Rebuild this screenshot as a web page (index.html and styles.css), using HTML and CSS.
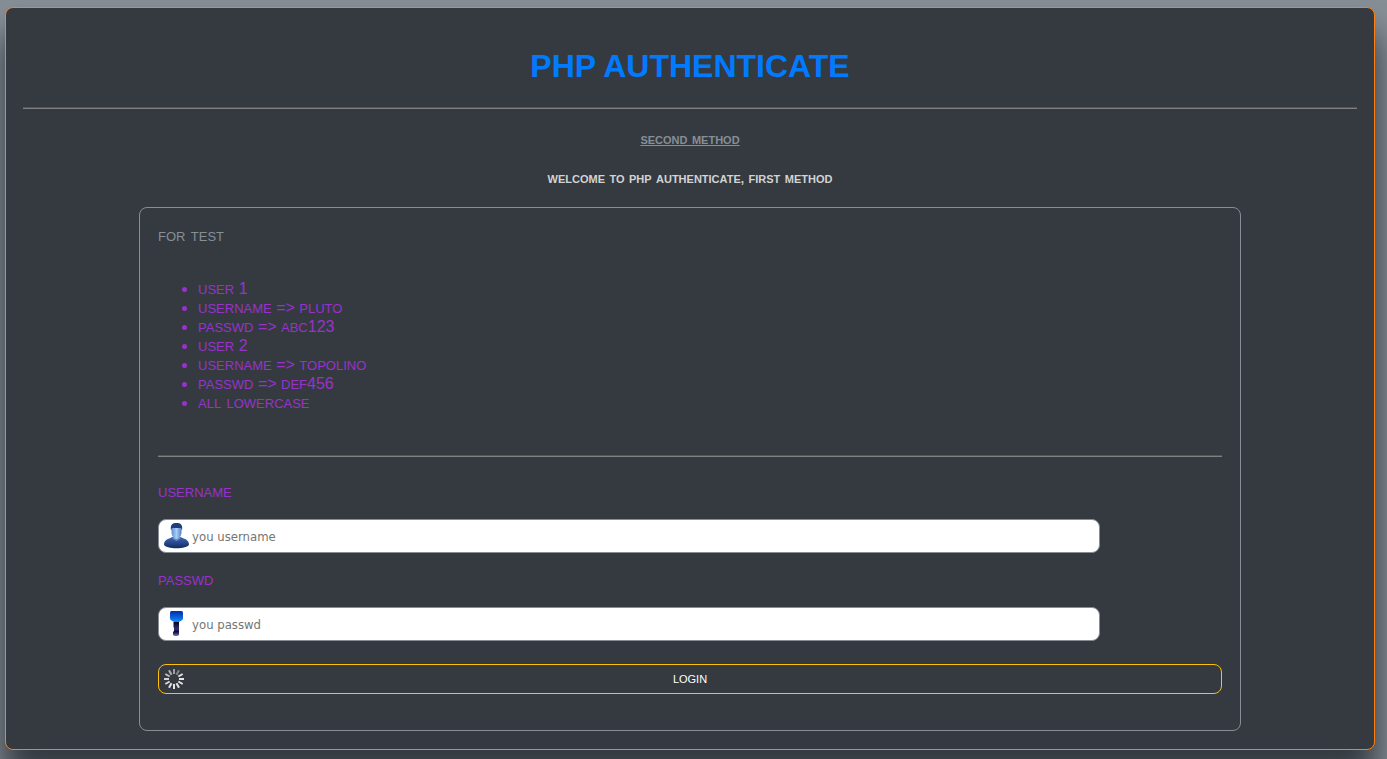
FILE: index.html
```
<!DOCTYPE html>
<html lang="en">
<head>
<meta charset="utf-8">
<title>PHP Authenticate</title>
<link rel="stylesheet" href="styles.css">
</head>
<body>
<main class="card">
  <h1 class="title">PHP AUTHENTICATE</h1>
  <hr class="rule">
  <p class="method"><a href="#second">second method</a></p>
  <h2 class="welcome">welcome to php authenticate<span class="comma">,</span> first method</h2>
  <form class="panel">
    <p class="hint caps">for test</p>
    <ul class="accounts">
      <li><span class="caps">user</span> 1</li>
      <li><span class="caps">username</span> =&gt; <span class="caps">pluto</span></li>
      <li><span class="caps">passwd</span> =&gt; <span class="caps">abc</span>123</li>
      <li><span class="caps">user</span> 2</li>
      <li><span class="caps">username</span> =&gt; <span class="caps">topolino</span></li>
      <li><span class="caps">passwd</span> =&gt; <span class="caps">def</span>456</li>
      <li><span class="caps">all lowercase</span></li>
    </ul>
    <hr class="rule">
    <label class="label caps" for="username">username</label>
    <div class="field">
      <svg class="icon" width="28" height="28" viewBox="0 0 28 28" aria-hidden="true">
        <defs>
          <linearGradient id="suit" x1="0" y1="0" x2="0" y2="1"><stop offset="0" stop-color="#3d68b8"/><stop offset="1" stop-color="#122a5e"/></linearGradient>
          <linearGradient id="face" x1="0" y1="0" x2="1" y2="0"><stop offset="0" stop-color="#5f8dd2"/><stop offset=".5" stop-color="#a9cdf5"/><stop offset="1" stop-color="#5480c4"/></linearGradient>
        </defs>
        <path d="M1 22.500C1 18 5 17 9.500 15h8C22 17 26 18 26 22.500C24.500 27.500 2.500 27.500 1 22.500Z" fill="url(#suit)"/>
        <path d="M10 12h7v5l-3.500 2-3.500-2z" fill="#5f8dd2"/>
        <path d="M8.500 5.500h10V10c0 3.500-2 7-5 7s-5-3.500-5-7Z" fill="url(#face)"/>
        <path d="M8 8.500C7 2.500 9.500 1 13.500 1S20 2.500 19 8.500L18 6H9Z" fill="#1c3f7c"/>
      </svg>
      <input class="input" id="username" type="text" placeholder="you username">
    </div>
    <label class="label caps" for="passwd">passwd</label>
    <div class="field">
      <svg class="icon" width="28" height="28" viewBox="0 0 28 28" aria-hidden="true">
        <defs>
          <linearGradient id="grip" x1="0" y1="0" x2="0" y2="1"><stop offset="0" stop-color="#082aa5"/><stop offset=".6" stop-color="#0864e0"/><stop offset="1" stop-color="#1590f4"/></linearGradient>
          <linearGradient id="blade" x1="0" y1="0" x2="0" y2="1"><stop offset="0" stop-color="#05051a"/><stop offset=".5" stop-color="#352d78"/><stop offset=".7" stop-color="#080830"/><stop offset="1" stop-color="#7180bd"/></linearGradient>
        </defs>
        <path d="M8.500 1h10q1.500 0 1.500 2v5q0 2-1.500 2.500l-2.500 1.500h-5l-2.500-1.500Q7 10 7 8V3q0-2 1.500-2Z" fill="url(#grip)"/>
        <path d="M10.500 12h5.500v13l-1.500 1h-3l-1.500-1v-3l1-1v-3l-.5-1z" fill="url(#blade)"/>
      </svg>
      <input class="input" id="passwd" type="password" placeholder="you passwd">
    </div>
    <button class="login" type="submit">
      <svg class="spinner" width="20" height="20" viewBox="-10 -10 20 20" stroke="#e4e4e4" stroke-width="2" aria-hidden="true">
        <path d="M0-5V-10" opacity=".6"/>
        <path d="M0-5V-10" opacity=".45" transform="rotate(30)"/>
        <path d="M0-5V-10" transform="rotate(60)"/>
        <path d="M0-5V-10" transform="rotate(90)"/>
        <path d="M0-5V-10" transform="rotate(120)"/>
        <path d="M0-5V-10" transform="rotate(150)"/>
        <path d="M0-5V-10" transform="rotate(180)"/>
        <path d="M0-5V-10" transform="rotate(210)"/>
        <path d="M0-5V-10" opacity=".95" transform="rotate(240)"/>
        <path d="M0-5V-10" opacity=".9" transform="rotate(270)"/>
        <path d="M0-5V-10" opacity=".8" transform="rotate(300)"/>
        <path d="M0-5V-10" opacity=".7" transform="rotate(330)"/>
      </svg>
      login
    </button>
  </form>
</main>
</body>
</html>
```
FILE: styles.css
```
* {
  box-sizing: border-box;
}

body {
  min-height: 100vh;
  margin: 0;
  padding: 7px 12px 9px 5px;
  background: #868e96;
  color: #d3d3d3;
  font: 16px/19px "Liberation Sans", Arial, sans-serif;
}

.card {
  padding: 20px 17px 18px;
  border: 1px solid #fd7e14;
  border-radius: 8px;
  background: #343a40;
  box-shadow: 0 28px 32px 2px #343a40;
}

.title {
  margin: 20px 0 22px;
  color: #007bff;
  font-size: 32px;
  line-height: 37px;
  text-align: center;
}

.rule {
  height: 2px;
  margin: 0;
  border: 0;
  border-top: 1px solid #555;
  border-bottom: 1px solid #808080;
}

.caps,
.method,
.welcome,
.login {
  font-variant-caps: small-caps;
}

.caps {
  font-size: 19px;
}

.method,
.welcome {
  margin: 20px 0 0;
  font-size: 16px;
  font-weight: bold;
  line-height: 19px;
  text-align: center;
}

.method a {
  color: #868e96;
}

.comma {
  font-size: 12px;
  line-height: 10px;
}

.panel {
  width: 82.6%;
  margin: 20px auto 0;
  padding: 17px 18px 36px;
  border: 1px solid #868e96;
  border-radius: 8px;
}

.hint {
  margin: 0;
  color: #868e96;
}

.accounts {
  margin: 35px 0 43px;
  padding-left: 40px;
  color: #9932cc;
}

.accounts .caps {
  line-height: 10px;
}

.label {
  display: block;
  margin: 24px 0 19px;
  color: #9932cc;
}

.field {
  position: relative;
  width: 88.5%;
}

.icon {
  position: absolute;
  top: 3px;
  left: 5px;
}

.input {
  display: block;
  width: 100%;
  height: 34px;
  padding: 0 0 0 33px;
  border: 1px solid #868e96;
  border-radius: 8px;
  background: #fff;
  color: #343a40;
  font: 13px "DejaVu Sans Condensed", Tahoma, sans-serif;
}

.input::placeholder {
  color: #757575;
}

.field + .label {
  margin-top: 16px;
}

.login {
  position: relative;
  display: block;
  width: 100%;
  height: 30px;
  margin-top: 23px;
  padding: 0 0 3px;
  border: 1px solid #ffc107;
  border-radius: 8px;
  background: transparent;
  color: #fff;
  font-family: inherit;
  font-size: 15px;
}

.spinner {
  position: absolute;
  top: 4px;
  left: 5px;
}
```
